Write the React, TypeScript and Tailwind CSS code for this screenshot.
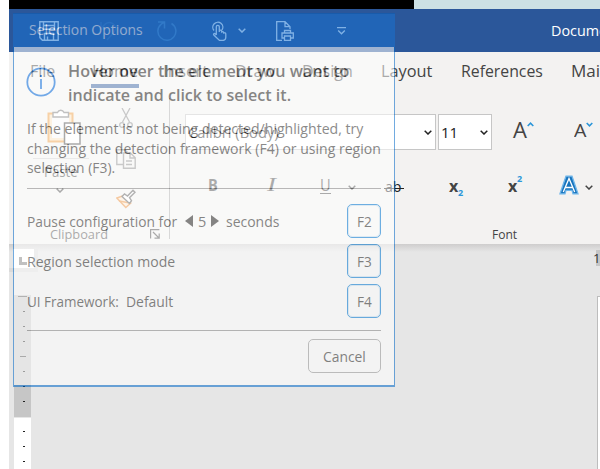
import { useLayoutEffect, useRef, type ReactNode } from "react";

/* Single line of text, condensed or widened to the width of its box. */
function Fit({ children, className = "" }: { children: ReactNode; className?: string }) {
  const outer = useRef<HTMLSpanElement>(null);
  const inner = useRef<HTMLSpanElement>(null);
  useLayoutEffect(() => {
    if (outer.current && inner.current) {
      const ratio = outer.current.clientWidth / inner.current.offsetWidth;
      inner.current.style.transform = `scaleX(${ratio})`;
    }
  }, []);
  return (
    <span ref={outer} className={`block h-5 shrink-0 leading-5 whitespace-nowrap ${className}`}>
      <span ref={inner} className="inline-block origin-left">
        {children}
      </span>
    </span>
  );
}

function Chevron({ className = "" }: { className?: string }) {
  return (
    <svg viewBox="0 0 8 5" className={`h-[5px] w-2 shrink-0 ${className}`} fill="none" stroke="currentColor" strokeWidth="1.5">
      <path d="M.7 .7 4 4 7.3 .7" />
    </svg>
  );
}

function TitleBar() {
  return (
    <header className="flex h-[43px] items-center overflow-hidden bg-[#2b579a] text-white">
      <svg viewBox="0 0 20 20" className="ml-[30px] size-5 shrink-0" fill="none" stroke="currentColor" strokeWidth="1.4">
        <path d="M.8 .8h18.4v18.4H3.4L.8 16.6z M4.5 .8v7.4h11V.8 M5.5 19v-6.5h9V19 M8.5 19v-3.5 M4.5 4.5h11" />
      </svg>
      <svg viewBox="0 0 20 20" className="ml-[41px] size-5 shrink-0 text-[#3f6cab]" fill="none" stroke="currentColor" strokeWidth="1.5">
        <path d="M1 1v7h7 M1.500 7.500C5 2 9 .8 12 2.200c4 2 4.500 6 2 9L7 19" />
      </svg>
      <svg viewBox="0 0 20 20" className="ml-[37px] size-5 shrink-0 text-[#4f83bf]" fill="none" stroke="currentColor" strokeWidth="1.5">
        <path d="M1 1h6.500v6.500 M14.500 2.500A9 9 0 1 1 4 3.400L7 1.200" />
      </svg>
      <svg viewBox="0 0 16 20" className="ml-[34px] h-5 w-4 shrink-0" fill="none" stroke="currentColor" strokeWidth="1.3">
        <path d="M3 9.500A5 5 0 1 1 11 9 M5.300 14V5.800a1.500 1.500 0 0 1 3 0V11 M8.300 9.500c1.500-.8 2.500 0 2.500 1.500 1-.8 2 0 2 1 1-.5 2 0 2 1v3c0 2-1 3.400-3 3.400H8.500L2.800 14c-.7-1 .5-2 1.500-1.300L5.300 14" />
      </svg>
      <Chevron className="ml-[11px]" />
      <svg viewBox="0 0 18 20" className="ml-[30px] h-5 w-[18px] shrink-0" fill="none" stroke="currentColor" strokeWidth="1.3">
        <path d="M6 19.300H.7V.7H9l5 5V8 M9 .7v5h5 M8.500 12V9.500h6V12 M8 17H6v-5h11.300v5H15 M8.500 15h6v4.300h-6z" />
      </svg>
      <svg viewBox="0 0 9 8" className="ml-[43px] h-2 w-[9px] shrink-0" fill="none" stroke="currentColor" strokeWidth="1.3">
        <path d="M0 .7h9 M1.200 3.500l3.300 3.300 3.300-3.300" />
      </svg>
      <Fit className="-mt-0.5 ml-[205px] w-[70px] text-[15px]">Document</Fit>
    </header>
  );
}

function Tabs() {
  return (
    <nav className="flex h-[46px] overflow-hidden pt-[9px] text-base text-[#444]">
      <Fit className="ml-[21px] w-[25px]">File</Fit>
      <div className="ml-9 w-12 shrink-0 text-[#222]">
        <Fit className="ml-px w-[46px]">Home</Fit>
        <div className="mt-[3px] h-1 bg-[#2b579a]" />
      </div>
      <Fit className="ml-6 w-[45px]">Insert</Fit>
      <Fit className="ml-[27px] w-[40px]">Draw</Fit>
      <Fit className="ml-[27px] w-[51px]">Design</Fit>
      <Fit className="ml-[28px] w-[51px]">Layout</Fit>
      <Fit className="ml-[29px] w-[82px]">References</Fit>
      <Fit className="ml-[28px] w-[66px]">Mailings</Fit>
    </nav>
  );
}

function ClipboardGroup() {
  return (
    <section className="flex h-[141px] w-[161px] shrink-0 flex-col border-r border-[#aaa] text-[#444]">
      <div className="flex h-[126px] shrink-0">
        <div className="ml-6 w-14 pt-[9px]">
          <svg viewBox="0 0 34 38" className="ml-3.5 h-[38px] w-[34px]" fill="none">
            <path d="M1.500 6.500h24v28h-24z" fill="#fbe3bd" stroke="#ee9a3a" strokeWidth="2" />
            <path d="M5 10h17v21H5z" fill="#fafafa" />
            <path d="M6 10V5.500h4.500a3.500 3.500 0 0 1 6.500 0H21.500V10z" fill="#fff" stroke="#777" strokeWidth="1.400" />
            <path d="M17.500 16h15.500v21H17.500z" fill="#fff" stroke="#444" strokeWidth="1.500" />
          </svg>
          <div className="mt-[13px] h-px bg-[#d0d0d0]" />
          <Fit className="mt-[3px] ml-[11px] w-[34px] text-[14px]">Paste</Fit>
          <Chevron className="mt-[6px] ml-[23px]" />
        </div>
        <div className="ml-[27px] w-5 pt-2.5">
          <svg viewBox="0 0 20 20" className="size-5 text-[#888]" fill="none" stroke="currentColor" strokeWidth="1.300">
            <path d="M6 0l7.500 14 M14 0L6.500 14" />
            <circle cx="6" cy="17" r="2.300" />
            <circle cx="14" cy="17" r="2.300" />
          </svg>
          <svg viewBox="0 0 20 20" className="mt-[21px] size-5 text-[#888]" fill="none" stroke="currentColor" strokeWidth="1.400">
            <path d="M7 15.500H.8V.8h8l3 3 M7.500 4h7l4.700 4.700v10.500H7.500z M14 4v5h5 M10 12h6 M10 15.500h6" />
          </svg>
          <svg viewBox="0 0 20 20" className="mt-5 size-5" fill="none" strokeWidth="1.400">
            <path d="M6.500 7 .8 9l9 9.500 5-4.500z" fill="#fde8cf" stroke="#ea8a32" />
            <path d="M3 12l11 2" stroke="#ea8a32" />
            <path d="M6 7.500l2.500-2.500 3 2L17 1.200l2 2-5.500 5.500 2 3-2 2.800z" stroke="#555" fill="#fff" />
          </svg>
        </div>
      </div>
      <div className="flex h-5 shrink-0 items-center">
        <Fit className="ml-[41px] w-[58px] text-[13px]">Clipboard</Fit>
        <svg viewBox="0 0 10 10" className="ml-[42px] size-2.5" fill="none" stroke="currentColor" strokeWidth="1.200">
          <path d="M.6 9.500V.6h8.800 M3 3l6 6 M9.200 4.500v4.700H4.500" />
        </svg>
      </div>
    </section>
  );
}

function FontGroup() {
  return (
    <section className="ml-[15px] flex w-[415px] shrink-0 flex-col overflow-hidden text-[#444]">
      <div className="mt-[16px] flex h-9">
        <div className="flex w-[251px] shrink-0 items-center justify-between border border-[#c6c6c6] bg-white pr-[3px] pl-0.5 text-[#222]">
          <Fit className="w-[91px] text-[15px]">Calibri (Body)</Fit>
          <Chevron />
        </div>
        <div className="ml-0.5 flex w-[54px] shrink-0 items-center justify-between border border-[#c6c6c6] bg-white pr-[3px] pl-0.5 text-[#222]">
          <Fit className="w-[17px] text-[15px]">11</Fit>
          <Chevron />
        </div>
        <div className="ml-[21px] flex w-[61px] pt-[5px]">
          <Fit className="w-[14px] text-[22px]">A</Fit>
          <svg viewBox="0 0 7 5" className="mt-[3px] h-[5px] w-[7px] text-[#2b96d9]" fill="none" stroke="currentColor" strokeWidth="1.600">
            <path d="M.7 4 3.500 1.200 6.300 4" />
          </svg>
        </div>
        <div className="flex pt-[6px]">
          <Fit className="w-[12px] text-[18px]">A</Fit>
          <svg viewBox="0 0 7 5" className="mt-[2px] h-[5px] w-[7px] text-[#2b96d9]" fill="none" stroke="currentColor" strokeWidth="1.600">
            <path d="M.7 1 3.500 3.800 6.300 1" />
          </svg>
        </div>
      </div>
      <div className="mt-[25px] flex h-6">
        <Fit className="ml-[23px] w-[10px] text-[16px] font-bold">B</Fit>
        <Fit className="ml-[49px] w-[9px] font-['Liberation_Serif',serif] text-[18px] italic">I</Fit>
        <div className="ml-[44px] h-[19px] w-[11px] border-b border-[#444]">
          <Fit className="w-[11px] text-[16px]">U</Fit>
        </div>
        <Chevron className="mt-[10px] ml-[17px]" />
        <div className="ml-[28px] flex w-[20px] flex-col">
          <Fit className="mt-px ml-px w-[17px] text-[15px] text-[#222]">ab</Fit>
          <div className="-mt-[8px] h-px bg-[#222]" />
        </div>
        <div className="ml-[45px] flex font-bold">
          <Fit className="mt-px w-[9px] text-[16px]">x</Fit>
          <Fit className="mt-[8px] w-[5px] text-[9px] text-[#2b96d9]">2</Fit>
        </div>
        <div className="ml-[45px] flex font-bold">
          <Fit className="mt-px w-[9px] text-[16px]">x</Fit>
          <Fit className="-mt-[6px] w-[5px] text-[9px] text-[#2b96d9]">2</Fit>
        </div>
        <svg viewBox="0 0 20 20" className="ml-[37px] size-5 shrink-0" strokeLinejoin="miter">
          <path d="M1 18.800 7 1.200h6l6 17.600h-5l-1-3.500H7l-1 3.500z" fill="#1874bd" stroke="#6fb6ea" strokeWidth="1.300" />
          <path d="M4.300 17 10 3.500 15.700 17 M6.500 12.500h7" fill="none" stroke="#fff" strokeWidth="1.300" />
        </svg>
        <Chevron className="mt-[10px] ml-[6px]" />
      </div>
      <Fit className="mt-[25px] ml-[307px] w-[25px] text-[13px]">Font</Fit>
    </section>
  );
}

const upperTicks = ["", "", "", "long", "", "", ""];

function Workspace() {
  return (
    <main className="flex h-[225px] bg-[linear-gradient(#cecdcd,#e6e6e6_8px)]">
      <aside className="w-[29px] shrink-0">
        <div className="mt-[5px] h-[23px] w-[29px] border-r-4 border-b-4 border-[#dadada] pl-1">
          <div className="h-[19px] bg-white pt-2 pl-1.5">
            <div className="size-2 border-b-3 border-l-3 border-[#777]" />
          </div>
        </div>
        <div className="mt-[23px] ml-[5px] flex h-[122px] w-[17px] flex-col items-center bg-[#c6c6c6] pt-px">
          <div className="h-px w-[9px] bg-[#555]" />
          {upperTicks.map((kind, i) => (
            <div key={i} className={kind ? "mt-3.5 h-px w-1.5 bg-[#444]" : "mt-3.5 ml-[3px] h-px w-0.5 bg-[#222]"} />
          ))}
        </div>
        <div className="mt-px ml-[5px] flex h-[52px] w-[17px] flex-col items-center bg-white">
          <div className="mt-[13px] ml-[3px] h-px w-0.5 bg-[#222]" />
          <div className="mt-3.5 ml-[3px] h-px w-0.5 bg-[#222]" />
          <div className="mt-3.5 ml-[3px] h-px w-0.5 bg-[#222]" />
        </div>
      </aside>
      <div className="flex flex-1 flex-col items-end">
        <div className="mt-[6px] flex h-4 w-[7px] items-center overflow-hidden bg-[linear-gradient(90deg,transparent_3px,#c6c6c6_3px)] text-[#333]">
          <Fit className="w-[7px] text-[13px]">1</Fit>
        </div>
        <div className="mt-[30px] w-[3px] flex-1 border-t border-l border-[#bdbdbd] bg-white" />
      </div>
    </main>
  );
}

function KeyButton({ children }: { children: string }) {
  return (
    <button className="flex size-[34px] items-center justify-center rounded-[5px] border border-[#0078d4] outline outline-[#0078d4]/20 -outline-offset-2">
      <Fit className="mt-px w-[15px]">{children}</Fit>
    </button>
  );
}

/* Half-transparent selection helper floating over the document window. */
function SelectionDialog() {
  return (
    <div className="absolute top-[13px] left-[13px] flex h-[374px] w-[382px] flex-col bg-white text-[14.500px] text-[#2c2b2a] opacity-55">
      <div className="h-[34px] shrink-0 border-t border-[#0b60b8] bg-[#1972d0] pt-[5px] pl-4 text-[#e6eefa]">
        <Fit className="w-[114px] text-[15px]">Selection Options</Fit>
      </div>
      <div className="flex-1 border-x border-b-2 border-[#0068c8] pt-[14px] pr-[13px] pl-[13px]">
        <div className="flex h-[58px]">
          <svg viewBox="0 0 30 30" className="mt-[6px] -ml-px size-[30px] shrink-0 text-[#0a6ee0]" fill="none" stroke="currentColor" strokeWidth="1.800">
            <circle cx="15" cy="15" r="13.700" />
            <path d="M15 12v10 M15 8v2" />
          </svg>
          <div className="ml-[12px] text-[17px] font-semibold">
            <Fit className="mb-1 w-[281px]">Hover over the element you want to</Fit>
            <Fit className="w-[223px]">indicate and click to select it.</Fit>
          </div>
        </div>
        <div className="h-[70px] border-b border-[#888]">
          <Fit className="w-[336px]">If the element is not being detected/highlighted, try</Fit>
          <Fit className="w-[354px]">changing the detection framework (F4) or using region</Fit>
          <Fit className="-mt-px w-[88px]">selection (F3).</Fit>
        </div>
        <div className="flex h-[142px] flex-col gap-1.5 border-b border-[#888] pt-[15px]">
          <div className="flex h-[34px] items-center">
            <Fit className="mt-0.5 w-[150px]">Pause configuration for</Fit>
            <svg viewBox="0 0 8 12" className="ml-2 h-3 w-2" fill="currentColor"><path d="M8 0v12L0 6z" /></svg>
            <Fit className="mt-0.5 ml-[5px] w-[8px]">5</Fit>
            <svg viewBox="0 0 8 12" className="ml-[5px] h-3 w-2" fill="currentColor"><path d="M0 0v12l8-6z" /></svg>
            <Fit className="mt-0.5 mr-auto ml-[7px] w-[53px]">seconds</Fit>
            <KeyButton>F2</KeyButton>
          </div>
          <div className="flex h-[34px] items-center">
            <Fit className="mt-0.5 mr-auto w-[148px]">Region selection mode</Fit>
            <KeyButton>F3</KeyButton>
          </div>
          <div className="flex h-[34px] items-center">
            <Fit className="mt-0.5 w-[92px]">UI Framework:</Fit>
            <Fit className="mt-0.5 mr-auto ml-[7px] w-[47px]">Default</Fit>
            <KeyButton>F4</KeyButton>
          </div>
        </div>
        <button className="mt-2 ml-auto flex h-[34px] w-[73px] items-center justify-center rounded-[5px] border border-[#999]">
          <Fit className="mt-px w-[43px]">Cancel</Fit>
        </button>
      </div>
    </div>
  );
}

export default function App() {
  return (
    <div className="relative h-[469px] w-[600px] overflow-hidden bg-white pl-[9px] font-['Open_Sans','Noto_Sans',sans-serif]">
      <div className="flex h-[9px]">
        <div className="w-[405px] bg-black" />
        <div className="flex-1 bg-[#cce0e4]" />
      </div>
      <TitleBar />
      <div className="h-[192px] bg-[#f3f2f1]">
        <Tabs />
        <div className="flex h-[146px]">
          <ClipboardGroup />
          <FontGroup />
        </div>
      </div>
      <Workspace />
      <SelectionDialog />
    </div>
  );
}
